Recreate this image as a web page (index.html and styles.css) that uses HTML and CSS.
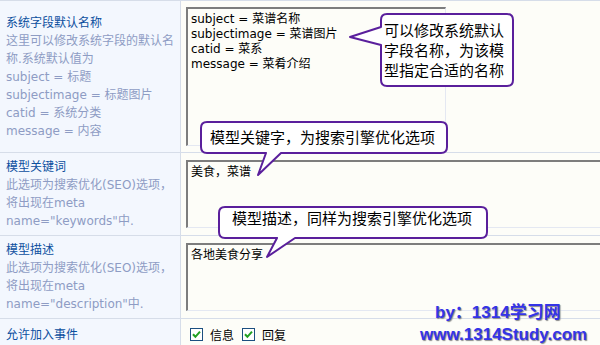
FILE: index.html
```html
<!DOCTYPE html>
<html lang="zh-CN">
<head>
<meta charset="utf-8">
<title>模型字段设置</title>
<link rel="stylesheet" href="styles.css">
</head>
<body>
<div class="form">
  <div class="label">
    <div class="title">系统字段默认名称</div>
    <div class="desc">这里可以修改系统字段的默认名称.系统默认值为<br>subject = 标题<br>subjectimage = 标题图片<br>catid = 系统分类<br>message = 内容</div>
  </div>
  <div class="field f1">
    <textarea class="ta ta1">subject = 菜谱名称
subjectimage = 菜谱图片
catid = 菜系
message = 菜肴介绍</textarea>
  </div>

  <div class="label">
    <div class="title">模型关键词</div>
    <div class="desc">此选项为搜索优化(SEO)选项，将出现在meta name="keywords"中.</div>
  </div>
  <div class="field f2">
    <textarea class="ta ta2">美食，菜谱</textarea>
  </div>

  <div class="label">
    <div class="title">模型描述</div>
    <div class="desc">此选项为搜索优化(SEO)选项，将出现在meta name="description"中.</div>
  </div>
  <div class="field f2">
    <textarea class="ta ta2">各地美食分享</textarea>
  </div>

  <div class="label last">
    <div class="title">允许加入事件</div>
  </div>
  <div class="field f4">
    <span class="check"><svg width="13" height="13" viewBox="0 0 13 13"><rect x="0.5" y="0.5" width="12" height="12" fill="#fff" stroke="#1c4f80"/><path d="M3 6.2 L5.4 8.8 L10 3.6" fill="none" stroke="#22a022" stroke-width="2"/></svg>信息</span>
    <span class="check"><svg width="13" height="13" viewBox="0 0 13 13"><rect x="0.5" y="0.5" width="12" height="12" fill="#fff" stroke="#1c4f80"/><path d="M3 6.2 L5.4 8.8 L10 3.6" fill="none" stroke="#22a022" stroke-width="2"/></svg>回复</span>
  </div>
</div>

<svg class="bubbles" width="600" height="345" viewBox="0 0 600 345">
  <path d="M387 14 H507 Q513 14 513 20 V80 Q513 86 507 86 H387 Q381 86 381 80 V45 L350 37 L381 27 V20 Q381 14 387 14 Z"/>
  <path d="M207 122 H441 Q447 122 447 128 V147 Q447 153 441 153 H281 L258 175 L266 153 H207 Q201 153 201 147 V128 Q201 122 207 122 Z"/>
  <path d="M225 207 H481 Q487 207 487 213 V232 Q487 238 481 238 H295 L267 257 L277 238 H225 Q219 238 219 232 V213 Q219 207 225 207 Z"/>
</svg>
<div class="note n1">可以修改系统默认<br>字段名称，为该模<br>型指定合适的名称</div>
<div class="note n2">模型关键字，为搜索引擎优化选项</div>
<div class="note n3">模型描述，同样为搜索引擎优化选项</div>

<div class="mark m1">by：1314学习网</div>
<div class="mark m2">www.1314Study.com</div>
</body>
</html>
```

FILE: styles.css
```css
html, body {
  margin: 0;
  padding: 0;
}
body {
  width: 600px;
  height: 345px;
  overflow: hidden;
  position: relative;
  background: #fdfdf8;
  font: 12px "DejaVu Sans", "Noto Sans CJK SC", sans-serif;
  color: #000;
}
.form {
  display: grid;
  grid-template-columns: 181px 1fr;
  border-top: 1px solid #d6dde9;
}
.label {
  background: #f3f7fe;
  border-right: 1px solid #d6dde9;
  border-bottom: 1px solid #d6dde9;
  padding: 0 4px 0 6px;
  display: flex;
  flex-direction: column;
  justify-content: center;
  line-height: 18px;
}
.label.last {
  justify-content: flex-start;
  padding-top: 7px;
}
.title {
  color: #0c4f9e;
}
.desc {
  color: #8e9cc4;
}
.field {
  border-bottom: 1px solid #d6dde9;
  padding: 7px 0 7px 5px;
  overflow: hidden;
}
.field.f1 {
  padding: 6px 0 6px 5px;
}
.ta {
  display: block;
  box-sizing: border-box;
  margin: 0;
  resize: none;
  overflow: hidden;
  background: #fdfdf8;
  border-style: solid;
  border-width: 2px 1px 1px 2px;
  border-color: #7d7d7d #e4e8f2 #e4e8f2 #7d7d7d;
  padding: 3px 3px;
  font: 12px/15px "DejaVu Sans", "Noto Sans CJK SC", sans-serif;
  color: #000;
}
.ta1 {
  width: 260px;
  height: 139px;
}
.ta2 {
  width: 440px;
  height: 68px;
}
.field.f4 {
  padding: 8px 0 8px 9px;
  display: flex;
  gap: 8px;
  line-height: 15px;
}
.check {
  display: flex;
  align-items: center;
  gap: 7px;
  font-family: "Noto Sans CJK SC", sans-serif;
}
.check svg {
  display: block;
}
.bubbles {
  position: absolute;
  left: 0;
  top: 0;
  pointer-events: none;
}
.bubbles path {
  fill: #fff;
  stroke: #5a1f9c;
  stroke-width: 2;
  stroke-linejoin: round;
}
.note {
  position: absolute;
  font: 15px/20px "Noto Sans CJK SC", sans-serif;
  color: #000;
  white-space: nowrap;
}
.n1 { left: 384px; top: 20px; }
.n2 { left: 210px; top: 127px; }
.n3 { left: 232px; top: 208px; }
.mark {
  position: absolute;
  font: bold 17px/20px "Liberation Sans", "Noto Sans CJK SC", sans-serif;
  color: #3434e8;
  text-shadow: 1px 1px 1px #8a8a8a, 0 0 2px #fff;
  white-space: nowrap;
}
.m1 { left: 435px; top: 303px; }
.m2 { left: 420px; top: 325px; }
```
